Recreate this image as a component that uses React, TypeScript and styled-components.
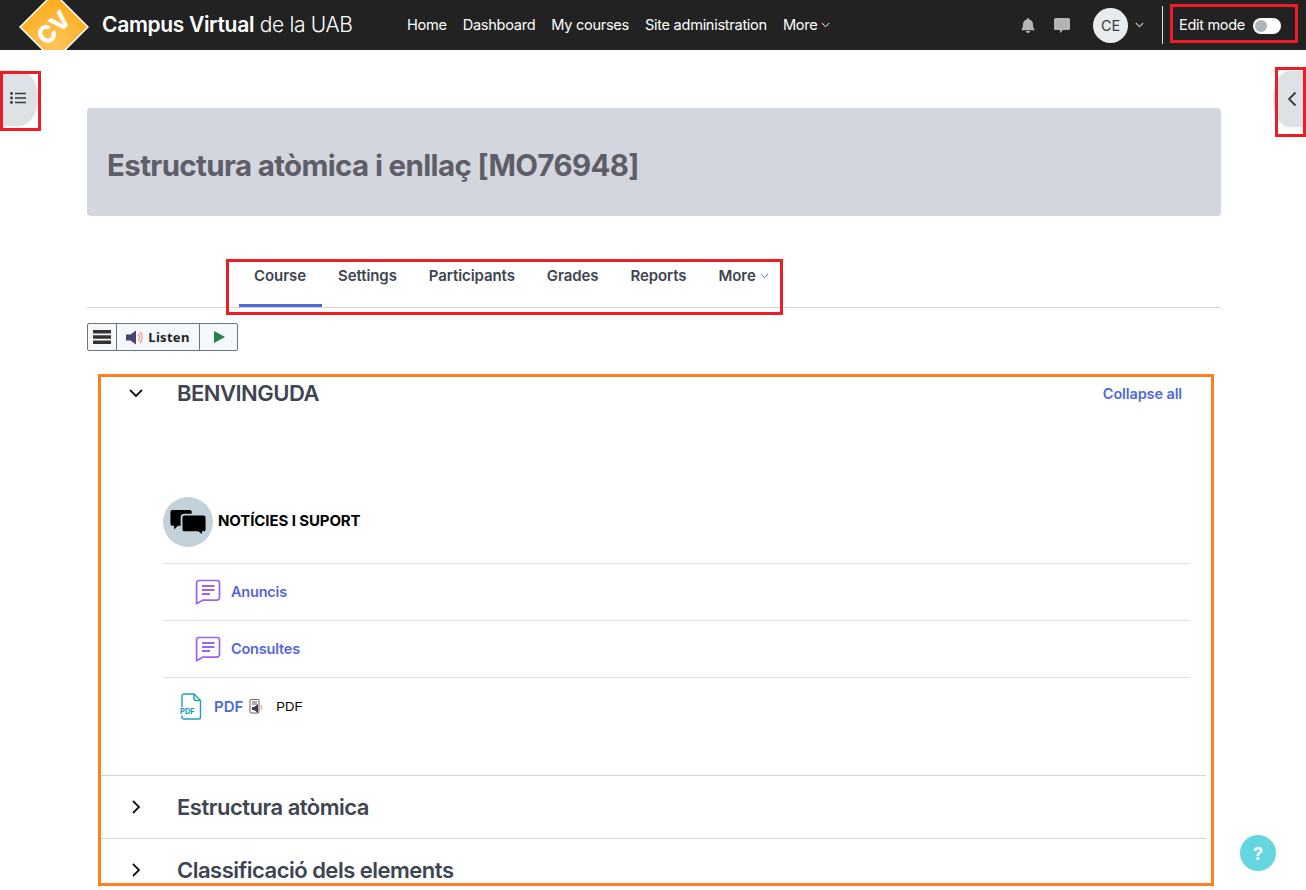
import React from "react";
import styled, { createGlobalStyle } from "styled-components";

const Global = createGlobalStyle`
  html, body { margin: 0; padding: 0; background: #fff; }
  body { font-family: Inter, "Liberation Sans", sans-serif; width: 1306px; height: 890px; overflow: hidden; }
  * { box-sizing: border-box; }
`;

const Page = styled.div`
  position: relative;
  width: 1306px;
  height: 890px;
  overflow: hidden;
  background: #fff;
`;

const TopBar = styled.header`
  height: 50px;
  background: #222;
  display: flex;
  align-items: center;
  color: #fff;
  overflow: hidden;
`;

const LogoSvg = styled.svg`
  flex: none;
  width: 74px;
  height: 50px;
  margin-left: 18px;
`;

const Brand = styled.div`
  margin-left: 10px;
  font-size: 21px;
  letter-spacing: -0.32px;
  white-space: nowrap;
  width: 305px;
  padding-bottom: 1px;
  b { font-weight: 600; }
  span { font-weight: 300; }
`;

const MainNav = styled.nav`
  display: flex;
  gap: 16px;
  align-items: center;
  padding-bottom: 1px;
`;

const NavLink = styled.span`
  font-size: 14.6px;
  font-weight: 400;
  letter-spacing: -0.3px;
  color: #fff;
  display: inline-flex;
  align-items: center;
  gap: 4px;
`;

const RightTools = styled.div`
  margin-left: auto;
  display: flex;
  align-items: center;
  height: 50px;
`;

const ToolIcon = styled.svg`
  width: 16px;
  height: 16px;
  margin-right: 18px;
`;

const Avatar = styled.div`
  width: 35px;
  height: 35px;
  border-radius: 50%;
  background: #e9ecef;
  color: #343a40;
  font-size: 14.5px;
  display: flex;
  align-items: center;
  justify-content: center;
  margin-left: 5px;
`;

const AvatarCaret = styled.svg`
  width: 9px;
  height: 6px;
  margin-left: 7px;
`;

const Divider = styled.div`
  width: 1px;
  height: 38px;
  background: #dee2e6;
  margin: 0 16px 0 18px;
`;

const EditMode = styled.div`
  display: flex;
  align-items: center;
  gap: 8px;
  font-size: 14.5px;
  letter-spacing: -0.3px;
  margin-right: 25px;
  padding-bottom: 1px;
`;

const Toggle = styled.div`
  width: 28px;
  height: 16px;
  border-radius: 8px;
  background: #fff;
  padding: 2px;
  margin-top: 2px;
  &::before {
    content: "";
    display: block;
    width: 12px;
    height: 12px;
    border-radius: 50%;
    background: #adb5bd;
  }
`;

const Content = styled.main`
  padding: 58px 85px 0 87px;
`;

const TitleBanner = styled.div`
  height: 108px;
  background: #d3d6df;
  border-radius: 4px;
  display: flex;
  align-items: center;
  padding: 6px 0 0 20px;
`;

const Title = styled.h1`
  margin: 0;
  font-size: 29.5px;
  font-weight: 700;
  letter-spacing: -0.65px;
  color: #5e5e69;
`;

const Tabs = styled.div`
  margin-top: 42px;
  height: 50px;
  border-bottom: 1px solid #d6d6da;
  display: flex;
  padding-left: 152px;
`;

const Tab = styled.div<{ $active?: boolean }>`
  height: 49px;
  padding: 9px 16px 0;
  ${(p) => (p.$active ? "padding-left: 15px;" : "")}
  font-size: 15px;
  font-weight: 600;
  letter-spacing: -0.08px;
  color: #3e4451;
  border-bottom: 3px solid ${(p) => (p.$active ? "#4f6bd5" : "transparent")};
  display: flex;
  align-items: flex-start;
  gap: 4px;
  line-height: 18px;
`;

const TabCaret = styled.span`
  display: flex;
  align-items: center;
  height: 18px;
`;

const ReadBar = styled.div`
  margin-top: 15px;
  display: inline-flex;
  height: 28px;
  border: 1px solid #6c757d;
  border-radius: 2px;
  background: #f5f8fb;
`;

const ReadCell = styled.div<{ $w: number }>`
  width: ${(p) => p.$w}px;
  display: flex;
  align-items: center;
  justify-content: center;
  gap: 4px;
  font-family: "Noto Sans", sans-serif;
  font-weight: 700;
  font-size: 13px;
  letter-spacing: 0.3px;
  color: #222;
  & + & { border-left: 1px solid #6c757d; }
`;

const Sections = styled.section`
  margin: 23px 15px 0 14px;
`;

const SectionHead = styled.div<{ $ruled?: boolean; $h: number }>`
  display: flex;
  align-items: center;
  height: ${(p) => p.$h}px;
  ${(p) => (p.$ruled ? "border-top: 1px solid #d6d6da;" : "")}
`;

const Chevron = styled.svg`
  width: 16px;
  height: 16px;
  margin-left: 27px;
  margin-right: 33px;
  flex: none;
`;

const SectionTitle = styled.h3`
  margin: 0;
  font-size: 22px;
  font-weight: 600;
  letter-spacing: -0.5px;
  color: #3e4451;
`;

const CollapseAll = styled.span`
  margin-left: auto;
  margin-right: 24px;
  padding-top: 1px;
  font-size: 14.5px;
  font-weight: 600;
  letter-spacing: -0.12px;
  color: #4f6bd5;
`;

const SectionBody = styled.div`
  padding: 86px 16px 0 62px;
  height: 364px;
`;

const LabelRow = styled.div`
  display: flex;
  align-items: center;
  gap: 5px;
  height: 67px;
  padding-bottom: 17px;
  border-bottom: 1px solid #dfdfe6;
`;

const Badge = styled.div`
  width: 50px;
  height: 50px;
  border-radius: 50%;
  background: #c3d1da;
  display: flex;
  align-items: center;
  justify-content: center;
`;

const LabelText = styled.span`
  font-size: 15px;
  font-weight: 700;
  letter-spacing: -0.1px;
  color: #000;
  padding-bottom: 2px;
`;

const ForumRow = styled.div`
  display: flex;
  align-items: center;
  height: 57px;
  padding-left: 32px;
  gap: 10px;
  border-bottom: 1px solid #dfdfe6;
`;

const ActivityLink = styled.span`
  font-size: 14.5px;
  font-weight: 600;
  letter-spacing: -0.2px;
  color: #5566d8;
  padding-bottom: 2px;
`;

const PdfRow = styled.div`
  display: flex;
  align-items: center;
  height: 57px;
  padding-left: 17px;
`;

const PdfLink = styled.span`
  margin-left: 12px;
  font-size: 15px;
  font-weight: 600;
  color: #4f6bd5;
`;

const PdfAudio = styled.svg`
  width: 16px;
  height: 15px;
  margin-left: 6px;
`;

const PdfNote = styled.span`
  margin-left: 11px;
  font-family: "Liberation Sans", sans-serif;
  font-size: 13px;
  color: #000;
`;

const SideToggle = styled.div<{ $side: "left" | "right"; $top: number }>`
  position: absolute;
  top: ${(p) => p.$top}px;
  ${(p) => p.$side}: 0;
  width: ${(p) => (p.$side === "left" ? 38 : 33)}px;
  height: 56px;
  background: #dee2e6;
  display: flex;
  align-items: center;
  justify-content: ${(p) => (p.$side === "left" ? "flex-start" : "flex-end")};
  padding: 0 9px 0 10px;
  border-radius: ${(p) => (p.$side === "left" ? "0 50% 50% 0 / 0 50% 50% 0" : "50% 0 0 50% / 50% 0 0 50%")};
  box-shadow: 0 1px 3px rgba(0, 0, 0, 0.06);
`;

const HelpButton = styled.div`
  position: absolute;
  left: 1240px;
  top: 835px;
  width: 36px;
  height: 36px;
  border-radius: 50%;
  background: #64d6e0;
  color: #fff;
  font-size: 18px;
  font-weight: 700;
  display: flex;
  align-items: center;
  justify-content: center;
`;

const Mark = styled.div<{ $x: number; $y: number; $w: number; $h: number; $c: string }>`
  position: absolute;
  left: ${(p) => p.$x}px;
  top: ${(p) => p.$y}px;
  width: ${(p) => p.$w}px;
  height: ${(p) => p.$h}px;
  border: 3px solid ${(p) => p.$c};
  pointer-events: none;
`;

const Caret = ({ color = "#fff" }: { color?: string }) => (
  <svg width="9" height="6" viewBox="0 0 9 6" fill="none" stroke={color} strokeWidth="1">
    <path d="M.8 1l3.700 3.700L8.200 1" />
  </svg>
);

const ChatLines = () => (
  <svg width="26" height="26" viewBox="0 0 26 26" fill="none" stroke="#9a63f5" strokeWidth="1.700">
    <path d="M4 1.500h18a2.500 2.500 0 0 1 2.500 2.500v14.600a2.500 2.500 0 0 1-2.500 2.500H8l-6.400 3.700V4A2.500 2.500 0 0 1 4 1.500z" strokeLinejoin="round" />
    <path d="M7 7h12.500M7 11h12.500M7 15h8" strokeWidth="1.900" />
  </svg>
);

export default function App() {
  return (
    <Page>
      <Global />
      <TopBar>
        <LogoSvg viewBox="0 0 74 50">
          <defs>
            <radialGradient id="cvg" cx="0.5" cy="0.75" r="0.6">
              <stop offset="0" stopColor="#ffc65a" />
              <stop offset="1" stopColor="#fbae22" />
            </radialGradient>
          </defs>
          <path d="M36 -7 L70 27 L36 61 L2 27 Z" fill="url(#cvg)" stroke="#fff" strokeWidth="1.500" />
          <text x="36" y="36" fill="#fff" fontFamily="Inter, sans-serif" fontWeight="800" fontSize="24" transform="rotate(-45 36 28)" textAnchor="middle">CV</text>
        </LogoSvg>
        <Brand>
          <b>Campus Virtual</b> <span>de la UAB</span>
        </Brand>
        <MainNav>
          <NavLink>Home</NavLink>
          <NavLink>Dashboard</NavLink>
          <NavLink>My courses</NavLink>
          <NavLink>Site administration</NavLink>
          <NavLink>
            More <Caret />
          </NavLink>
        </MainNav>
        <RightTools>
          <ToolIcon viewBox="0 0 16 16" fill="#b4b4b4">
            <path d="M8 16a2 2 0 0 0 2-2H6a2 2 0 0 0 2 2zM8 1a1 1 0 0 0-1 1v.6A5 5 0 0 0 3 7.500c0 1.600-.4 3.400-1.500 5V13.300h13V12.500C13.400 10.900 13 9.100 13 7.500a5 5 0 0 0-4-4.900V2a1 1 0 0 0-1-1z" />
          </ToolIcon>
          <ToolIcon viewBox="0 0 16 16" fill="#b4b4b4">
            <path d="M1.500 1h13A1.500 1.500 0 0 1 16 2.500v9a1.500 1.500 0 0 1-1.500 1.500H9l-3 3v-3H1.500A1.500 1.500 0 0 1 0 11.500v-9A1.500 1.500 0 0 1 1.500 1z" />
          </ToolIcon>
          <Avatar>CE</Avatar>
          <AvatarCaret viewBox="0 0 9 6" fill="none" stroke="#adb5bd" strokeWidth="1.200">
            <path d="M.8 1l3.700 3.700L8.200 1" />
          </AvatarCaret>
          <Divider />
          <EditMode>
            Edit mode
            <Toggle />
          </EditMode>
        </RightTools>
      </TopBar>

      <Content>
        <TitleBanner>
          <Title>Estructura atòmica i enllaç [MO76948]</Title>
        </TitleBanner>
        <Tabs>
          <Tab $active>Course</Tab>
          <Tab>Settings</Tab>
          <Tab>Participants</Tab>
          <Tab>Grades</Tab>
          <Tab>Reports</Tab>
          <Tab>
            More
            <TabCaret>
              <Caret color="#4f6bd5" />
            </TabCaret>
          </Tab>
        </Tabs>
        <ReadBar>
          <ReadCell $w={28}>
            <svg width="18" height="14" viewBox="0 0 18 14" fill="#333">
              <path d="M0 0h18v3.500H0zM0 5.200h18v3.500H0zM0 10.400h18v3.500H0z" />
            </svg>
          </ReadCell>
          <ReadCell $w={83}>
            <svg width="18" height="15" viewBox="0 0 18 15">
              <path d="M0 4.500h4.500L10 .5v14l-5.500-4H0z" fill="#45456e" />
              <path d="M12 4a5 5 0 0 1 0 7M14 2a8 8 0 0 1 0 11" fill="none" stroke="#f08a7a" strokeWidth="1.100" />
            </svg>
            Listen
          </ReadCell>
          <ReadCell $w={38}>
            <svg width="12" height="12" viewBox="0 0 12 12" fill="#27824a">
              <path d="M1 0l11 6-11 6z" />
            </svg>
          </ReadCell>
        </ReadBar>

        <Sections>
          <SectionHead $h={37}>
            <Chevron viewBox="0 0 16 16" fill="none" stroke="#111" strokeWidth="1.800">
              <path d="M2 5l6 6 6-6" />
            </Chevron>
            <SectionTitle>BENVINGUDA</SectionTitle>
            <CollapseAll>Collapse all</CollapseAll>
          </SectionHead>
          <SectionBody>
            <LabelRow>
              <Badge>
                <svg width="36" height="24" viewBox="0 0 38 26" fill="#000">
                  <path d="M2 0h19a2 2 0 0 1 2 2v2H15a4 4 0 0 0-4 4v9H8l-4 4v-4H2a2 2 0 0 1-2-2V2a2 2 0 0 1 2-2z" />
                  <path d="M15 6h21a2 2 0 0 1 2 2v13a2 2 0 0 1-2 2h-2v3l-4-3H15a2 2 0 0 1-2-2V8a2 2 0 0 1 2-2z" />
                </svg>
              </Badge>
              <LabelText>NOTÍCIES I SUPORT</LabelText>
            </LabelRow>
            <ForumRow>
              <ChatLines />
              <ActivityLink>Anuncis</ActivityLink>
            </ForumRow>
            <ForumRow>
              <ChatLines />
              <ActivityLink>Consultes</ActivityLink>
            </ForumRow>
            <PdfRow>
              <svg width="22" height="27" viewBox="0 0 22 27" fill="none" stroke="#1ba3b5" strokeWidth="1.400">
                <path d="M2 14V3a2 2 0 0 1 2-2h10l6.500 6.500V24a2 2 0 0 1-2 2H4a2 2 0 0 1-2-2v-1.500" strokeLinejoin="round" />
                <path d="M14 1v4.500a2 2 0 0 0 2 2h4.500" />
                <text x="0" y="20.500" fontFamily="Inter, sans-serif" fontSize="7.500" fontWeight="800" fill="#1ba3b5" stroke="none">PDF</text>
              </svg>
              <PdfLink>PDF</PdfLink>
              <PdfAudio viewBox="0 0 16 15">
                <rect x="1" y=".5" width="9" height="13.500" rx="1" fill="#fff" stroke="#6d6060" />
                <path d="M3 3h5M3 5h5" stroke="#555" />
                <path d="M3 8h2l4-3v9l-4-3H3z" fill="#3d3d55" />
                <path d="M12 6a4 4 0 0 1 0 5" fill="none" stroke="#f08a7a" />
              </PdfAudio>
              <PdfNote>PDF</PdfNote>
            </PdfRow>
          </SectionBody>
          <SectionHead $ruled $h={63}>
            <Chevron viewBox="0 0 16 16" fill="none" stroke="#111" strokeWidth="1.800">
              <path d="M5 2l6 6-6 6" />
            </Chevron>
            <SectionTitle>Estructura atòmica</SectionTitle>
          </SectionHead>
          <SectionHead $ruled $h={63}>
            <Chevron viewBox="0 0 16 16" fill="none" stroke="#111" strokeWidth="1.800">
              <path d="M5 2l6 6-6 6" />
            </Chevron>
            <SectionTitle>Classificació dels elements</SectionTitle>
          </SectionHead>
        </Sections>
      </Content>

      <SideToggle $side="left" $top={70}>
        <svg width="16" height="12" viewBox="0 0 16 12" fill="#343a40">
          <circle cx="1.500" cy="1.500" r="1.400" />
          <circle cx="1.500" cy="6" r="1.400" />
          <circle cx="1.500" cy="10.500" r="1.400" />
          <path d="M5 .7h11v1.600H5zM5 5.200h11v1.600H5zM5 9.700h11v1.600H5z" />
        </svg>
      </SideToggle>
      <SideToggle $side="right" $top={71}>
        <svg width="10" height="16" viewBox="0 0 10 16" fill="none" stroke="#343a40" strokeWidth="1.800">
          <path d="M8.500 1.500L2 8l6.500 6.500" />
        </svg>
      </SideToggle>
      <HelpButton>?</HelpButton>

      <Mark $x={1170} $y={4} $w={128} $h={39} $c="#ee1c25" />
      <Mark $x={0} $y={71} $w={41} $h={60} $c="#ee1c25" />
      <Mark $x={1275} $y={67} $w={31} $h={70} $c="#ee1c25" />
      <Mark $x={226} $y={259} $w={557} $h={56} $c="#ee1c25" />
      <Mark $x={98} $y={374} $w={1116} $h={512} $c="#ff7f27" />
    </Page>
  );
}
